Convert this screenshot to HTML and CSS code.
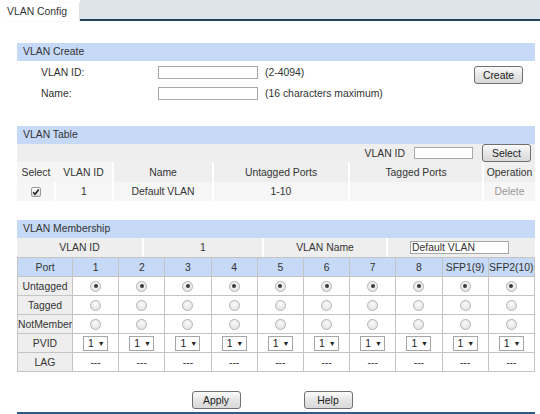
FILE: index.html
```html
<!DOCTYPE html>
<html>
<head>
<meta charset="utf-8">
<title>VLAN Config</title>
<link rel="stylesheet" href="styles.css">
</head>
<body>
<div class="tabbar">
  <div class="tab">VLAN Config</div>
  <div class="tabfill"></div>
</div>
<div class="main">
  <section class="sec">
    <div class="sechead">VLAN Create</div>
    <div class="createbody">
      <div class="frow">
        <span class="flabel">VLAN ID:</span>
        <input class="inp" type="text">
        <span class="hint">(2-4094)</span>
        <button class="btn btn-create">Create</button>
      </div>
      <div class="frow">
        <span class="flabel">Name:</span>
        <input class="inp" type="text">
        <span class="hint">(16 characters maximum)</span>
      </div>
    </div>
  </section>

  <section class="sec sec-table">
    <div class="sechead">VLAN Table</div>
    <div class="toolbar">
      <span class="tlabel">VLAN ID</span>
      <input class="inp inp-small" type="text">
      <button class="btn btn-select">Select</button>
    </div>
    <table class="vtable">
      <colgroup>
        <col class="c-sel"><col class="c-id"><col class="c-name"><col class="c-untag"><col class="c-tag"><col class="c-op">
      </colgroup>
      <thead>
        <tr>
          <th class="light">Select</th>
          <th class="light">VLAN ID</th>
          <th>Name</th>
          <th>Untagged Ports</th>
          <th>Tagged Ports</th>
          <th>Operation</th>
        </tr>
      </thead>
      <tbody>
        <tr>
          <td><span class="chk"><svg width="8" height="8" viewBox="0 0 8 8"><path d="M1.2 4.3 L3 6.3 L6.8 1.4" fill="none" stroke="#222" stroke-width="1.6"/></svg></span></td>
          <td>1</td>
          <td>Default VLAN</td>
          <td>1-10</td>
          <td></td>
          <td class="op">Delete</td>
        </tr>
      </tbody>
    </table>
  </section>

  <section class="sec sec-member">
    <div class="sechead">VLAN Membership</div>
    <div class="idrow">
      <div class="idcell">VLAN ID</div>
      <div class="idcell">1</div>
      <div class="idcell">VLAN Name</div>
      <div class="idcell idinp"><input class="inp inp-name" type="text" value="Default VLAN"></div>
    </div>
    <table class="ptable">
      <colgroup>
        <col class="c-first">
        <col><col><col><col><col><col><col><col><col><col>
      </colgroup>
      <tr class="portrow">
        <th>Port</th><th>1</th><th>2</th><th>3</th><th>4</th><th>5</th><th>6</th><th>7</th><th>8</th><th>SFP1(9)</th><th>SFP2(10)</th>
      </tr>
      <tr>
        <th class="rh">Untagged</th>
        <td><span class="radio on"></span></td><td><span class="radio on"></span></td><td><span class="radio on"></span></td><td><span class="radio on"></span></td><td><span class="radio on"></span></td><td><span class="radio on"></span></td><td><span class="radio on"></span></td><td><span class="radio on"></span></td><td><span class="radio on"></span></td><td><span class="radio on"></span></td>
      </tr>
      <tr>
        <th class="rh">Tagged</th>
        <td><span class="radio"></span></td><td><span class="radio"></span></td><td><span class="radio"></span></td><td><span class="radio"></span></td><td><span class="radio"></span></td><td><span class="radio"></span></td><td><span class="radio"></span></td><td><span class="radio"></span></td><td><span class="radio"></span></td><td><span class="radio"></span></td>
      </tr>
      <tr>
        <th class="rh">NotMember</th>
        <td><span class="radio"></span></td><td><span class="radio"></span></td><td><span class="radio"></span></td><td><span class="radio"></span></td><td><span class="radio"></span></td><td><span class="radio"></span></td><td><span class="radio"></span></td><td><span class="radio"></span></td><td><span class="radio"></span></td><td><span class="radio"></span></td>
      </tr>
      <tr>
        <th class="rh">PVID</th>
        <td><span class="sel">1 <i>&#9660;</i></span></td><td><span class="sel">1 <i>&#9660;</i></span></td><td><span class="sel">1 <i>&#9660;</i></span></td><td><span class="sel">1 <i>&#9660;</i></span></td><td><span class="sel">1 <i>&#9660;</i></span></td><td><span class="sel">1 <i>&#9660;</i></span></td><td><span class="sel">1 <i>&#9660;</i></span></td><td><span class="sel">1 <i>&#9660;</i></span></td><td><span class="sel">1 <i>&#9660;</i></span></td><td><span class="sel">1 <i>&#9660;</i></span></td>
      </tr>
      <tr>
        <th class="rh">LAG</th>
        <td>---</td><td>---</td><td>---</td><td>---</td><td>---</td><td>---</td><td>---</td><td>---</td><td>---</td><td>---</td>
      </tr>
    </table>
  </section>

  <div class="actions">
    <button class="btn btn-act">Apply</button>
    <button class="btn btn-act">Help</button>
  </div>
  <div class="bottomline"></div>
</div>
</body>
</html>
```

FILE: styles.css
```css
html, body {
  margin: 0;
  padding: 0;
  background: #ffffff;
}
body {
  font-family: "Liberation Sans", Arial, sans-serif;
  font-size: 10.4px;
  color: #333333;
  width: 540px;
  height: 414px;
  overflow: hidden;
}
.tabbar {
  display: flex;
  height: 21px;
}
.tab {
  width: 72px;
  margin-left: 4px;
  margin-top: 3px;
  padding-left: 3px;
  line-height: 17px;
  background: #ffffff;
  color: #333333;
  box-shadow: 1px 0 1px rgba(0,0,0,0.12);
}
.tabfill {
  flex: 1;
  margin-left: 1px;
  background: #dde4ea;
  border-bottom: 2px solid #22415c;
}
.main {
  margin-left: 17px;
  width: 518px;
}
.sec {
  margin-top: 22px;
}
.sec-table {
  margin-top: 22px;
}
.sec-member {
  margin-top: 19px;
}
.sechead {
  height: 18px;
  line-height: 18px;
  background: #c6d9f7;
  padding-left: 6px;
  color: #333333;
}
.createbody {
  padding-top: 1px;
}
.frow {
  display: flex;
  align-items: center;
  height: 21px;
}
.flabel {
  width: 117px;
  margin-left: 24px;
}
.inp {
  box-sizing: border-box;
  width: 100px;
  height: 13px;
  border: 1px solid #a8a8a8;
  margin: 0;
  padding: 0 1px;
  font-family: "Liberation Sans", Arial, sans-serif;
  font-size: 10.4px;
  color: #333333;
  background: #ffffff;
  outline: none;
}
.hint {
  margin-left: 7px;
  flex: 1;
}
.btn {
  box-sizing: border-box;
  height: 18px;
  width: 49px;
  padding: 0;
  font-family: "Liberation Sans", Arial, sans-serif;
  font-size: 10.4px;
  color: #222222;
  border: 1px solid #6f6f6f;
  border-radius: 3px;
  background: linear-gradient(#fbfbfb, #e6e6e6 50%, #d9d9d9);
}
.btn-create {
  align-self: flex-start;
  margin-top: 4px;
  margin-right: 12px;
}
.toolbar {
  display: flex;
  align-items: center;
  justify-content: flex-end;
  height: 18px;
  background: #eeeeee;
}
.tlabel {
  margin-right: 9px;
}
.inp-small {
  width: 59px;
  height: 12px;
}
.btn-select {
  margin-left: 9px;
  margin-right: 4px;
}
.vtable {
  width: 518px;
  border-collapse: collapse;
  table-layout: fixed;
}
.c-sel { width: 38px; }
.c-id { width: 58px; }
.c-name { width: 100px; }
.c-untag { width: 136px; }
.c-tag { width: 134px; }
.c-op { width: 52px; }
.vtable th {
  font-weight: normal;
  height: 20px;
  padding: 0;
  background: #efefef;
  border-left: 2px solid #ffffff;
  text-align: center;
  white-space: nowrap;
}
.vtable th.light {
  background: #f5f5f5;
  border-left: none;
}
.vtable td {
  height: 19px;
  padding: 0;
  text-align: center;
  background: #f6f6f6;
  border-left: 2px solid #ffffff;
}
.vtable td:first-child {
  border-left: none;
}
.vtable td.op {
  color: #999999;
}
.chk {
  display: inline-block;
  box-sizing: border-box;
  width: 10px;
  height: 10px;
  border: 1px solid #9a9a9a;
  border-radius: 2px;
  background: linear-gradient(#ffffff, #dcdcdc);
  vertical-align: middle;
  position: relative;
}
.chk svg {
  position: absolute;
  left: 0;
  top: 0;
}
.idrow {
  display: flex;
  height: 19px;
  background: #eeeeee;
}
.idcell {
  line-height: 19px;
  text-align: center;
  border-left: 2px solid #ffffff;
}
.idcell:nth-child(1) { width: 125px; border-left: none; }
.idcell:nth-child(2) { width: 118px; }
.idcell:nth-child(3) { width: 122px; }
.idcell:nth-child(4) { flex: 1; }
.idinp {
  display: flex;
  align-items: center;
  padding-left: 22px;
}
.inp-name {
  width: 99px;
  text-align: left;
}
.ptable {
  width: 518px;
  border-collapse: collapse;
  table-layout: fixed;
}
.c-first { width: 55px; }
.ptable th, .ptable td {
  border: 1px solid #c4c4c4;
  height: 18px;
  padding: 0;
  text-align: center;
  font-weight: normal;
  white-space: nowrap;
}
.portrow th {
  background: #c6d9f7;
}
.ptable th.rh {
  background: #eeeeee;
}
.ptable td {
  background: #ffffff;
}
.radio {
  display: inline-block;
  box-sizing: border-box;
  width: 11px;
  height: 11px;
  border-radius: 50%;
  border: 1px solid #b4b4b4;
  background: radial-gradient(circle at 50% 35%, #fafafa, #dedede);
  vertical-align: middle;
  position: relative;
}
.radio.on::after {
  content: "";
  position: absolute;
  left: 2.5px;
  top: 2.5px;
  width: 4px;
  height: 4px;
  border-radius: 50%;
  background: #3a3a3a;
}
.sel {
  display: inline-block;
  box-sizing: border-box;
  width: 25px;
  height: 15px;
  line-height: 13px;
  border: 1px solid #a6a6a6;
  text-align: left;
  padding-left: 4px;
  vertical-align: middle;
  font-size: 10.4px;
  color: #222222;
  background: #ffffff;
}
.sel i {
  font-style: normal;
  font-size: 7px;
  vertical-align: 1px;
  margin-left: 1px;
}
.actions {
  display: flex;
  justify-content: center;
  gap: 63px;
  margin-top: 19px;
  padding-right: 8px;
}
.bottomline {
  margin-top: 3px;
  height: 2px;
  background: #2c5c83;
}
```
